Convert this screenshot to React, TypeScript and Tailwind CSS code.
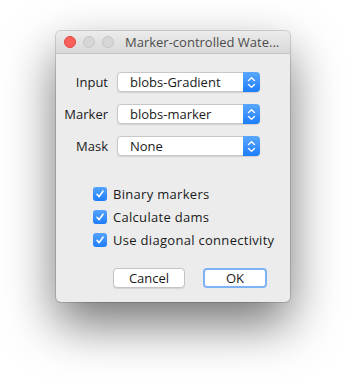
import React from "react";

const font = { fontFamily: '"Open Sans", "Liberation Sans", Arial, sans-serif' };

function Popup({ value }: { value: string }) {
  return (
    <div className="flex h-[20px] w-[143px] items-stretch rounded-[4px] border border-[#c8c8c8] bg-white shadow-[0_1px_1px_rgba(0,0,0,0.12)]">
      <div className="flex flex-1 items-center pl-[12px] text-[13px] leading-none text-[#1a1a1a]">{value}</div>
      <div className="-my-px -mr-px flex w-[17px] items-center justify-center rounded-r-[4px] bg-gradient-to-b from-[#5aa7fd] to-[#1a7cfa]">
        <svg width="9" height="13" viewBox="0 0 9 13" fill="none">
          <path d="M1.5 4.5 L4.5 1.8 L7.5 4.5" stroke="white" strokeWidth="1.4" strokeLinecap="round" strokeLinejoin="round" />
          <path d="M1.5 8.5 L4.5 11.2 L7.5 8.5" stroke="white" strokeWidth="1.4" strokeLinecap="round" strokeLinejoin="round" />
        </svg>
      </div>
    </div>
  );
}

function Check({ label }: { label: string }) {
  return (
    <div className="flex h-[14px] items-center gap-[6px]">
      <div className="flex h-[14px] w-[14px] items-center justify-center rounded-[3px] bg-gradient-to-b from-[#54a3fd] to-[#1b7dfa]">
        <svg width="10" height="10" viewBox="0 0 10 10" fill="none">
          <path d="M2 5.3 L4.1 7.6 L8 2.2" stroke="white" strokeWidth="1.6" strokeLinecap="round" strokeLinejoin="round" />
        </svg>
      </div>
      <span className="text-[13px] leading-none tracking-[0.3px] text-[#1a1a1a]">{label}</span>
    </div>
  );
}

export default function App() {
  return (
    <div className="h-[383px] w-[346px] bg-white pl-[56px] pt-[31px]" style={font}>
      <div className="flex h-[271px] w-[234px] flex-col overflow-hidden rounded-[5px] bg-[#ececec] shadow-[0_22px_50px_rgba(0,0,0,0.55),0_0_0_1px_rgba(0,0,0,0.15)]">
        <div className="flex h-[23px] items-center border-b border-[#c4c4c4] bg-gradient-to-b from-[#ececec] to-[#d8d8d8] pl-[8px]">
          <div className="flex gap-[7px]">
            <div className="h-[12px] w-[12px] rounded-full border border-[#e0443e] bg-[#fc605c]" />
            <div className="h-[12px] w-[12px] rounded-full border border-[#c6c6c6] bg-[#d6d6d6]" />
            <div className="h-[12px] w-[12px] rounded-full border border-[#c6c6c6] bg-[#d6d6d6]" />
          </div>
          <div className="ml-[11px] whitespace-nowrap text-[13px] leading-none text-[#4d4d4d]">Marker-controlled Wate...</div>
        </div>
        <div className="flex flex-col pt-[18px]">
          <div className="flex flex-col gap-[12px]">
            {[
              ["Input", "blobs-Gradient"],
              ["Marker", "blobs-marker"],
              ["Mask", "None"],
            ].map(([l, v]) => (
              <div key={l} className="flex items-center gap-[9px]">
                <div className="w-[52px] text-right text-[13px] leading-none text-[#1a1a1a]">{l}</div>
                <Popup value={v} />
              </div>
            ))}
          </div>
          <div className="mt-[31px] flex flex-col gap-[9px] pl-[37px]">
            <Check label="Binary markers" />
            <Check label="Calculate dams" />
            <Check label="Use diagonal connectivity" />
          </div>
          <div className="mt-[21px] flex gap-[18px] pl-[57px]">
            <div className="flex h-[20px] w-[72px] items-center justify-center rounded-[4px] border border-[#c4c4c4] bg-white text-[13px] leading-none text-[#1a1a1a] shadow-[0_1px_1px_rgba(0,0,0,0.1)]">
              Cancel
            </div>
            <div className="flex h-[20px] w-[64px] items-center justify-center rounded-[4px] border-2 border-[#7fb2f4] bg-white text-[13px] leading-none text-[#1a1a1a]">
              OK
            </div>
          </div>
        </div>
      </div>
    </div>
  );
}
